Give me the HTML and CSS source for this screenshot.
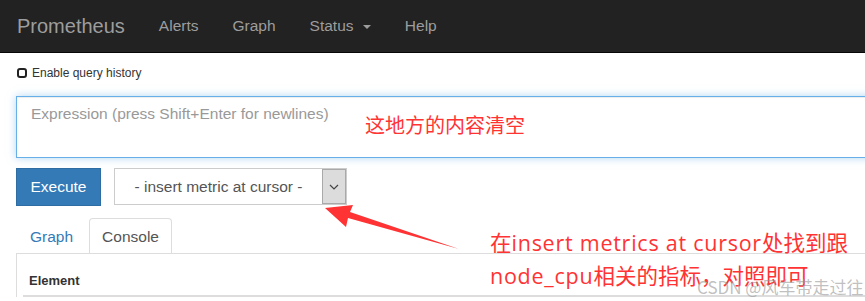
FILE: index.html
```html
<!DOCTYPE html>
<html lang="zh-CN">
<head>
    <meta charset="UTF-8">
    <meta name="viewport" content="width=device-width, initial-scale=1.0">
    <title>Prometheus Time Series Collection and Processing Server</title>
    <link rel="stylesheet" href="styles.css">
</head>
<body>
    <nav class="navbar">
        <a class="brand" href="#">Prometheus</a>
        <a class="nav-link" href="#">Alerts</a>
        <a class="nav-link" href="#">Graph</a>
        <a class="nav-link" href="#">Status <span class="caret"></span></a>
        <a class="nav-link" href="#">Help</a>
    </nav>

    <div class="page">
        <label class="history">
            <span class="checkbox"></span>
            Enable query history
        </label>

        <textarea class="expression" placeholder="Expression (press Shift+Enter for newlines)"></textarea>

        <div class="controls">
            <button class="execute">Execute</button>
            <div class="metric-select">
                <span class="metric-text">- insert metric at cursor -</span>
                <span class="metric-arrow">
                    <svg width="10" height="6" viewBox="0 0 10 6"><path d="M1 1 L5 5 L9 1" fill="none" stroke="#444" stroke-width="1.2"/></svg>
                </span>
            </div>
        </div>

        <ul class="tabs">
            <li class="tab">Graph</li>
            <li class="tab active">Console</li>
        </ul>
        <div class="tab-panel">
            <table class="console">
                <thead>
                    <tr><th>Element</th></tr>
                </thead>
            </table>
        </div>
    </div>

    <!-- annotations drawn over the screenshot -->
    <div class="note note-clear">这地方的内容清空</div>
    <div class="note note-metric">在<span class="latin">insert metrics at cursor</span>处找到跟<br><span class="latin">node_cpu</span>相关的指标，对照即可</div>
    <svg class="arrow" width="865" height="301" viewBox="0 0 865 301">
        <polygon points="325,208 353,205 350,212 459,249 348,218 346,227" fill="#ff3333"/>
    </svg>
    <div class="watermark">CSDN @风车带走过往</div>
</body>
</html>
```

FILE: styles.css
```css
body {
    margin: 0;
    font-family: "Liberation Sans", Arial, sans-serif;
    background-color: white;
    color: #333;
    overflow: hidden;
    width: 865px;
    height: 301px;
    position: relative;
}
.navbar {
    display: flex;
    align-items: center;
    height: 52px;
    background-color: #222;
    border-bottom: 1px solid #080808;
}
.brand {
    padding: 0 17px;
    font-size: 20px;
    color: #9d9d9d;
    text-decoration: none;
}
.nav-link {
    padding: 0 17px;
    font-size: 15.5px;
    color: #9d9d9d;
    text-decoration: none;
}
.caret {
    display: inline-block;
    width: 0;
    height: 0;
    margin-left: 5px;
    vertical-align: middle;
    border-top: 4px solid #9d9d9d;
    border-left: 4px solid transparent;
    border-right: 4px solid transparent;
}
.page {
    width: 1000px;
    padding-left: 16px;
}
.history {
    display: flex;
    align-items: center;
    margin-top: 13px;
    margin-left: 1px;
    font-size: 12px;
    color: #333;
}
.checkbox {
    display: inline-block;
    width: 6px;
    height: 6px;
    border: 2px solid #222;
    border-radius: 3px;
    margin-right: 5px;
}
.expression {
    display: block;
    box-sizing: border-box;
    width: 1000px;
    height: 62px;
    margin-top: 16px;
    padding: 7px 14px;
    font-family: "Liberation Sans", Arial, sans-serif;
    font-size: 15.5px;
    line-height: 20px;
    border: 1px solid #66afe9;
    outline: none;
    resize: none;
    box-shadow: inset 0 1px 1px rgba(0,0,0,.075), 0 0 8px rgba(102,175,233,.5);
}
.expression::placeholder {
    color: #999;
}
.controls {
    display: flex;
    align-items: flex-start;
    margin-top: 10px;
    gap: 13px;
}
.execute {
    width: 85px;
    height: 38px;
    font-family: "Liberation Sans", Arial, sans-serif;
    font-size: 15.5px;
    color: white;
    background-color: #337ab7;
    border: 1px solid #2e6da4;
    border-radius: 0;
}
.metric-select {
    display: flex;
    box-sizing: border-box;
    width: 233px;
    height: 37px;
    border: 1px solid #ccc;
    background: white;
}
.metric-text {
    flex: 1;
    text-align: center;
    line-height: 35px;
    font-size: 15.5px;
    color: #555;
}
.metric-arrow {
    display: flex;
    align-items: center;
    justify-content: center;
    width: 22px;
    background-color: #dcdcdc;
    border: 1px solid #a9a9a9;
}
.tabs {
    display: flex;
    list-style: none;
    margin: 12px 0 0;
    padding: 0;
    gap: 2px;
}
.tab {
    height: 34px;
    line-height: 36px;
    padding: 0 13px;
    font-size: 15.5px;
    color: #337ab7;
    border: 1px solid transparent;
    border-bottom: none;
}
.tab.active {
    padding: 0 12px;
    color: #555;
    border-color: #ddd;
    border-radius: 4px 4px 0 0;
    background: white;
}
.tab-panel {
    border-top: 1px solid #ddd;
    border-left: 1px solid #ddd;
    padding: 0 0 0 6px;
}
.console {
    width: 100%;
    border-collapse: collapse;
}
.console th {
    text-align: left;
    font-size: 13px;
    padding: 19px 6px 7px;
    border-bottom: 2px solid #ddd;
}
.note {
    position: absolute;
    font-family: "Noto Sans CJK SC", sans-serif;
    font-size: 20px;
    color: #ff3333;
    white-space: nowrap;
}
.note-clear {
    left: 365px;
    top: 111px;
    line-height: 28px;
}
.note-metric {
    left: 490px;
    top: 226px;
    line-height: 33px;
    font-family: "Open Sans", "Noto Sans CJK SC", sans-serif;
    font-size: 21.5px;
}
.note-metric .latin {
    letter-spacing: 0.75px;
}
.arrow {
    position: absolute;
    left: 0;
    top: 0;
    pointer-events: none;
}
.watermark {
    position: absolute;
    left: 697px;
    top: 275px;
    font-family: "Noto Sans CJK SC", sans-serif;
    font-size: 17px;
    line-height: 24px;
    color: rgba(150,150,150,0.6);
    white-space: nowrap;
}
```
